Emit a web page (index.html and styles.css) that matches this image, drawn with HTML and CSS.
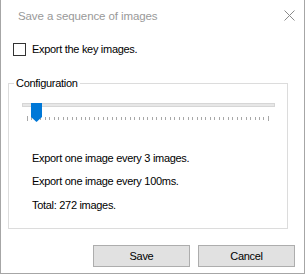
FILE: index.html
```html
<!DOCTYPE html>
<html lang="en">
<head>
    <meta charset="UTF-8">
    <title>Save a sequence of images</title>
    <link rel="stylesheet" href="styles.css">
</head>
<body>

    <div class="dialog">
        <div class="titlebar">
            <span class="title">Save a sequence of images</span>
            <svg class="close" width="11" height="11" viewBox="0 0 11 11">
                <path d="M0.5 0.5L10.5 10.5M10.5 0.5L0.5 10.5" stroke="#8a8a8a" stroke-width="1" fill="none"/>
            </svg>
        </div>

        <label class="check-row">
            <span class="checkbox"></span>
            <span>Export the key images.</span>
        </label>

        <fieldset class="group">
            <legend>Configuration</legend>
            <div class="slider">
                <div class="track"></div>
                <svg class="thumb" width="11" height="19" viewBox="0 0 11 19">
                    <polygon points="0,0 11,0 11,14 5.5,19 0,14" fill="#0078d7"/>
                </svg>
                <svg class="ticks" width="242" height="5" viewBox="0 0 242 5" shape-rendering="crispEdges">
                    <path stroke="#a8a8a8" stroke-width="1" d="M0.5 0v5M241.5 0v5
                        M4.5 1v3M9.5 1v3M13.5 1v3M18.5 1v3M22.5 1v3M27.5 1v3M31.5 1v3M36.5 1v3M40.5 1v3M45.5 1v3
                        M49.5 1v3M54.5 1v3M58.5 1v3M62.5 1v3M67.5 1v3M71.5 1v3M76.5 1v3M80.5 1v3M85.5 1v3M89.5 1v3
                        M94.5 1v3M98.5 1v3M103.5 1v3M107.5 1v3M112.5 1v3M116.5 1v3M120.5 1v3M125.5 1v3M129.5 1v3M134.5 1v3
                        M138.5 1v3M143.5 1v3M147.5 1v3M152.5 1v3M156.5 1v3M161.5 1v3M165.5 1v3M170.5 1v3M174.5 1v3M178.5 1v3
                        M183.5 1v3M187.5 1v3M192.5 1v3M196.5 1v3M201.5 1v3M205.5 1v3M210.5 1v3M214.5 1v3M219.5 1v3M223.5 1v3
                        M228.5 1v3M232.5 1v3M236.5 1v3"/>
                </svg>
            </div>
            <p class="info">Export one image every 3 images.</p>
            <p class="info">Export one image every 100ms.</p>
            <p class="info total">Total: 272 images.</p>
        </fieldset>

        <div class="buttons">
            <button>Save</button>
            <button>Cancel</button>
        </div>
    </div>

</body>
</html>
```

FILE: styles.css
```css
* {
    margin: 0;
    padding: 0;
    box-sizing: border-box;
}
body {
    font-family: "Liberation Sans", Arial, sans-serif;
    font-size: 11px;
    letter-spacing: -0.3px;
    color: #000;
    background-color: #fff;
}
.dialog {
    width: 305px;
    height: 274px;
    border: 1px solid #a6a6a6;
    border-top: none;
    background: #fff;
}
.titlebar {
    height: 32px;
    display: flex;
    align-items: center;
    justify-content: space-between;
    padding: 0 9px 0 17px;
}
.title {
    font-size: 11.5px;
    letter-spacing: -0.1px;
    color: #999;
}
.close {
    display: block;
    margin-top: -2px;
}
.check-row {
    display: flex;
    align-items: center;
    gap: 6px;
    height: 13px;
    margin: 11px 0 0 12px;
    line-height: 13px;
}
.checkbox {
    width: 13px;
    height: 13px;
    border: 1px solid #333;
    background: #fff;
}
.group {
    width: 280px;
    margin: 21px 0 0 7px;
    border: 1px solid #dcdcdc;
    padding: 0 0 11px 0;
}
.group legend {
    margin-left: 5px;
    padding: 0 2px;
    line-height: 13px;
}
.slider {
    position: relative;
    width: 253px;
    height: 25px;
    margin: 13px 0 0 13px;
}
.track {
    height: 4px;
    margin-top: 6px;
    background: #e7e7e7;
    border: 1px solid #d6d6d6;
}
.thumb {
    position: absolute;
    left: 9px;
    top: 0;
}
.ticks {
    display: block;
    margin: 9px 0 0 5px;
}
.info {
    height: 23px;
    line-height: 23px;
    padding-left: 23px;
}
.info:first-of-type {
    margin-top: 19px;
}
.total {
    margin-top: 1px;
}
.buttons {
    display: flex;
    justify-content: flex-end;
    gap: 8px;
    padding-right: 9px;
    margin-top: 16px;
}
button {
    width: 97px;
    height: 22px;
    font-family: "Liberation Sans", Arial, sans-serif;
    font-size: 11px;
    letter-spacing: -0.3px;
    color: #000;
    background: #e1e1e1;
    border: 1px solid #adadad;
}
```
